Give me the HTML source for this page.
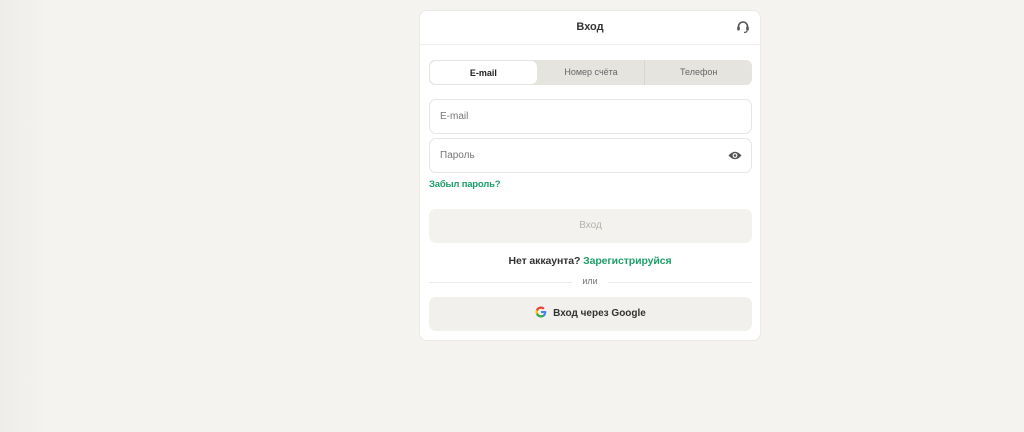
<!DOCTYPE html>
<html><head><meta charset="utf-8"><style>
*{box-sizing:border-box;margin:0;padding:0}
body{width:1024px;height:432px;background:#f4f3f0;font-family:"Liberation Sans",sans-serif;position:relative;overflow:hidden}
.strip{position:absolute;left:0;top:0;width:44px;height:432px;background:linear-gradient(to right,#eeedea,#f3f2ef)}
.card{position:absolute;left:419px;top:10px;width:342px;height:331px;background:#fff;border-radius:8px;border:1px solid #ebe9e5}
.hdr{height:34px;border-bottom:1px solid #efeee9;text-align:center;line-height:33px;font-size:11px;font-weight:bold;color:#333}
.sup{position:absolute;right:10px;top:9px}
.tabs{position:absolute;left:9px;top:49px;width:323px;height:25px;background:#e6e4df;border-radius:6px;display:flex;font-size:9px;color:#666}
.tabs div{flex:1;text-align:center;line-height:25px}
.tabs .a{background:#fff;color:#222;font-weight:bold;border-radius:6px;margin:1px}
.tabs .m{border-right:1px solid #d8d6d0}
.in{position:absolute;left:9px;width:323px;height:35px;border:1px solid #e8e6e2;border-radius:7px;font-size:10px;color:#777;padding-left:10px;line-height:33px}
.fg{position:absolute;left:9px;top:168px;font-size:9.5px;font-weight:bold;color:#1e9e6a;letter-spacing:-0.2px}
.btn{position:absolute;left:9px;width:323px;height:34px;background:#f3f2ef;border-radius:7px;text-align:center;line-height:34px;font-size:10px}
.reg{position:absolute;left:0;width:100%;top:244px;text-align:center;font-size:10.5px;font-weight:bold;color:#333;letter-spacing:-0.1px}
.reg span{color:#1e9e6a}
.div{position:absolute;left:9px;width:323px;top:271px;border-top:1px solid #ebe9e5}
.or{position:absolute;left:0;width:100%;top:265px;text-align:center;font-size:9px;color:#777}
.or span{background:#fff;padding:0 10px}
</style></head><body>
<div class="strip"></div>
<div class="card">
<div class="hdr">Вход</div>
<svg class="sup" width="14" height="14" viewBox="0 0 14 14"><path d="M2.5 8V6.5a4.5 4.5 0 0 1 9 0V8" fill="none" stroke="#555" stroke-width="1.6"/><rect x="1.2" y="6.5" width="2.6" height="4" rx="1" fill="#555"/><rect x="10.2" y="6.5" width="2.6" height="4" rx="1" fill="#555"/><path d="M11 10.5q0 2-3 2" fill="none" stroke="#555" stroke-width="1.2"/></svg>
<div class="tabs"><div class="a">E-mail</div><div class="m">Номер счёта</div><div>Телефон</div></div>
<div class="in" style="top:88px">E-mail</div>
<div class="in" style="top:127px">Пароль<svg style="position:absolute;right:9px;top:11px" width="14" height="11" viewBox="0 0 14 11"><path d="M0.5 5.5Q7-2 13.5 5.5Q7 13 0.5 5.5Z" fill="#555"/><circle cx="7" cy="5.5" r="2.4" fill="#fff"/><circle cx="7" cy="5.5" r="1.3" fill="#555"/></svg></div>
<div class="fg">Забыл пароль?</div>
<div class="btn" style="top:198px;color:#b5b3ae">Вход</div>
<div class="reg">Нет аккаунта? <span>Зарегистрируйся</span></div>
<div class="div"></div>
<div class="or"><span>или</span></div>
<div class="btn" style="top:286px;background:#f1f0ec;color:#333;font-weight:bold"><svg style="vertical-align:-2px;margin-right:6px" width="12" height="12" viewBox="0 0 48 48"><path fill="#4285F4" d="M45 24.5c0-1.6-.1-3.1-.4-4.5H24v8.5h11.8c-.5 2.8-2.1 5.1-4.4 6.6v5.5h7.1c4.2-3.8 6.5-9.4 6.5-16.1z"/><path fill="#34A853" d="M24 46c5.9 0 10.9-2 14.5-5.4l-7.1-5.5c-2 1.300-4.5 2.1-7.4 2.1-5.7 0-10.6-3.8-12.3-9H4.4v5.7C8 41.1 15.4 46 24 46z"/><path fill="#FBBC05" d="M11.7 28.2c-.4-1.3-.7-2.7-.7-4.2s.3-2.9.7-4.2v-5.7H4.4C2.9 17.1 2 20.4 2 24s.9 6.9 2.4 9.9l7.3-5.7z"/><path fill="#EA4335" d="M24 10.8c3.2 0 6.1 1.1 8.4 3.3l6.3-6.3C34.9 4.2 29.9 2 24 2 15.4 2 8 6.9 4.4 14.1l7.3 5.7c1.7-5.2 6.6-9 12.3-9z"/></svg>Вход через Google</div>
</div>
</body></html>
